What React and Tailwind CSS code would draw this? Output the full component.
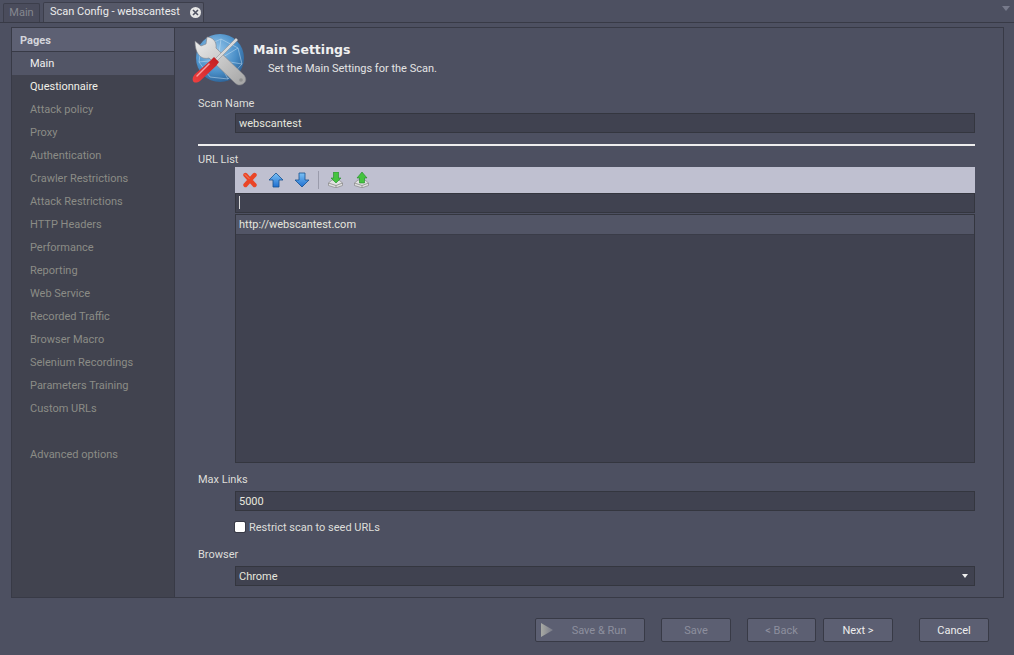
const PAGES = [
    ["Main", "selected"],
    ["Questionnaire", "on"],
    ["Attack policy"],
    ["Proxy"],
    ["Authentication"],
    ["Crawler Restrictions"],
    ["Attack Restrictions"],
    ["HTTP Headers"],
    ["Performance"],
    ["Reporting"],
    ["Web Service"],
    ["Recorded Traffic"],
    ["Browser Macro"],
    ["Selenium Recordings"],
    ["Parameters Training"],
    ["Custom URLs"],
]

function ToolsIcon() {
    return (
        <svg width="56" height="56" viewBox="0 0 56 56" className="shrink-0">
            <defs>
                <radialGradient id="globe" cx="0.4" cy="0.35" r="0.75">
                    <stop offset="0" stopColor="#9ccbee" />
                    <stop offset="0.6" stopColor="#4a8fc8" />
                    <stop offset="1" stopColor="#235589" />
                </radialGradient>
                <linearGradient id="metal" x1="0" y1="0" x2="1" y2="1">
                    <stop offset="0" stopColor="#eeeeee" />
                    <stop offset="1" stopColor="#a3a3a3" />
                </linearGradient>
                <linearGradient id="handle" x1="0" y1="1" x2="1" y2="0">
                    <stop offset="0" stopColor="#f04040" />
                    <stop offset="1" stopColor="#c01c20" />
                </linearGradient>
            </defs>
            <circle cx="28" cy="28" r="24" fill="url(#globe)" />
            <g stroke="#cfe6f7" strokeWidth="0.6" fill="none" opacity="0.8">
                <path d="M9 18 L29 9 L46 18 L50 34 L36 49 L18 47 L7 32 Z" />
                <path d="M29 9 L26 30 L46 18 M26 30 L50 34 M26 30 L36 49 M26 30 L7 32" />
            </g>
            <path
                d="M3 11 L9 16 L14 14 L15 7 C21 7 25 12 24 18 L52 45 C55 49 54 52 51 54 C48 56 45 55 43 53 L17 28 C10 30 3 25 3 11 Z"
                fill="url(#metal)"
                stroke="#7d7f86"
                strokeWidth="0.6"
            />
            <path d="M44 8 L46 10 L25 31 L23 29 Z" fill="#d8d8d8" stroke="#85878c" strokeWidth="0.5" />
            <path d="M22 27 L27 32 L24 36 L8 51 C5 53 2 53 1 51 C0 49 1 46 3 44 L18 31 Z" fill="url(#handle)" />
            <path d="M17 34 L5 46" stroke="#f7a0a0" strokeWidth="1.4" strokeLinecap="round" />
            <circle cx="49" cy="50" r="1.8" fill="#8f8f8f" />
        </svg>
    )
}

function ArrowIcon({ up }) {
    return (
        <svg width="16" height="16" viewBox="0 0 16 16">
            <defs>
                <linearGradient id="arrowBlue" x1="0" y1="0" x2="0" y2="1">
                    <stop offset="0" stopColor="#7cc2f5" />
                    <stop offset="1" stopColor="#1f6fd0" />
                </linearGradient>
            </defs>
            <path
                d={up ? "M8 1 L15 8 L11 8 L11 15 L5 15 L5 8 L1 8 Z" : "M5 1 L11 1 L11 8 L15 8 L8 15 L1 8 L5 8 Z"}
                fill="url(#arrowBlue)"
                stroke="#17508f"
                strokeWidth="0.8"
            />
        </svg>
    )
}

function TrayIcon({ up }) {
    return (
        <svg width="16" height="16" viewBox="0 0 16 16">
            <path d="M0.5 11 L4 8 L11 8 L14.5 11 L14.5 13.5 L8 15.8 L0.5 13.5 Z" fill="#e2e2e2" stroke="#7c7c7c" strokeWidth="0.6" />
            <path d="M0.5 11 L8 13.5 L14.5 11 M8 13.5 L8 15.8" fill="none" stroke="#7c7c7c" strokeWidth="0.7" />
            <path
                d={up ? "M8 0 L13 6 L10.5 6 L10.5 11 L5.5 11 L5.5 6 L3 6 Z" : "M5.5 0 L10.5 0 L10.5 6 L13 6 L8 11 L3 6 L5.5 6 Z"}
                fill="#45c43f"
                stroke="#22862a"
                strokeWidth="0.6"
            />
        </svg>
    )
}

function DeleteIcon() {
    return (
        <svg width="16" height="16" viewBox="0 0 16 16">
            <path d="M3.5 3 L12.5 13 M12.5 3 L3.5 13" stroke="#ea4526" strokeWidth="4.4" strokeLinecap="round" />
            <path d="M3 2.5 L7 6.5" stroke="#f58a6a" strokeWidth="1" strokeLinecap="round" />
        </svg>
    )
}

function Label({ children, className = "" }) {
    return <label className={`h-[16px] pt-px leading-[16px] ${className}`}>{children}</label>
}

function Field({ children, className = "" }) {
    return (
        <div className={`ml-[37px] mr-[28px] h-[20px] flex items-center px-[3px] pt-[2px] bg-[#404250] border border-[#34363f] text-[#e6e6de] ${className}`}>
            {children}
        </div>
    )
}

function FooterButton({ children, disabled, className = "" }) {
    return (
        <button className={`h-[24px] pt-[2px] rounded-[2px] border border-[#383a46] bg-[#5c5f72] flex items-center justify-center ${disabled ? "text-[#8d8f9e]" : "text-[#ededed]"} ${className}`}>
            {children}
        </button>
    )
}

export default function App() {
    return (
        <div className="w-[1014px] h-[655px] overflow-hidden flex flex-col bg-[#4d5061] text-[11px] text-[#dededa] font-['Roboto','Open_Sans',sans-serif]">
            <div className="h-[23px] shrink-0 flex items-end pl-[3px] gap-[3px] border-b border-[#383a46] relative">
                <div className="w-[37px] h-[19px] flex items-center justify-center bg-[#4a4c5c] border border-b-0 border-[#3c3e4b] rounded-t-[2px] text-[#85878f]">
                    Main
                </div>
                <div className="w-[161px] h-[20px] flex items-center pl-[6px] bg-[#565969] border border-b-0 border-[#3c3e4b] rounded-t-[2px] text-[#ececec]">
                    <span>Scan Config - webscantest</span>
                    <span className="ml-auto mr-[2px] w-[11px] h-[11px] rounded-full bg-[#e6e6e6] flex items-center justify-center">
                        <svg width="7" height="7" viewBox="0 0 7 7">
                            <path d="M1 1 L6 6 M6 1 L1 6" stroke="#505363" strokeWidth="1.6" />
                        </svg>
                    </span>
                </div>
                <svg width="10" height="6" viewBox="0 0 10 6" className="absolute right-[3px] top-[6px]">
                    <path d="M1 0 L9 0 L5 5 Z" fill="#777a8b" />
                </svg>
            </div>

            <div className="mt-[4px] ml-[11px] mr-[10px] h-[571px] shrink-0 flex border border-[#383a46]">
                <aside className="w-[163px] shrink-0 flex flex-col bg-[#41434f] border-r border-[#383a46]">
                    <div className="h-[24px] shrink-0 flex items-center pl-[8px] pt-[4px] bg-[#5d6073] border-b border-[#383a46] font-bold text-[#d4d5dc]">
                        Pages
                    </div>
                    <ul>
                        {PAGES.map(([name, state]) => (
                            <li
                                key={name}
                                className={`h-[23px] pt-[2px] flex items-center pl-[18px] ${
                                    state === "selected" ? "bg-[#525566] text-[#f0f0f0]" : state === "on" ? "text-[#f0f0e8]" : "text-[#8b8c86]"
                                }`}
                            >
                                {name}
                            </li>
                        ))}
                        <li className="h-[23px] pt-[2px] mt-[23px] flex items-center pl-[18px] text-[#8b8c86]">Advanced options</li>
                    </ul>
                </aside>

                <main className="flex-1 flex flex-col pl-[23px]">
                    <div className="h-[68px] shrink-0 flex items-start -ml-[6px] pt-[2px]">
                        <ToolsIcon />
                        <div className="ml-[5px] pt-[12px]">
                            <p className="text-[12.5px] leading-[16px] font-bold text-[#f0f0f0] font-['DejaVu_Sans',sans-serif]">Main Settings</p>
                            <p className="mt-[3px] ml-[15px] leading-[16px] text-[#e4e4e4]">Set the Main Settings for the Scan.</p>
                        </div>
                    </div>

                    <Label className="mt-[-1px]">Scan Name</Label>
                    <Field className="mt-[2px]">webscantest</Field>
                    <div className="h-[2px] mt-[11px] mr-[28px] bg-[#eeeeee]" />

                    <Label className="mt-[5px]">URL List</Label>
                    <div className="ml-[37px] mr-[28px] h-[26px] flex items-center gap-[10px] pl-[7px] bg-[#bfc0d0]">
                        <DeleteIcon />
                        <ArrowIcon up />
                        <ArrowIcon />
                        <span className="w-px h-[18px] bg-[#9a9bab] -ml-[2px] -mr-px" />
                        <TrayIcon />
                        <TrayIcon up />
                    </div>
                    <Field>
                        <span className="w-px h-[13px] -mt-[3px] bg-[#d8d8d8]" />
                    </Field>
                    <div className="ml-[37px] mr-[28px] h-[249px] mt-px bg-[#404250] border border-[#34363f]">
                        <div className="h-[20px] pt-[2px] flex items-center pl-[3px] bg-[#525566] border-b border-[#3a3c48] text-[#e6e6de]">http://webscantest.com</div>
                    </div>

                    <Label className="mt-[8px]">Max Links</Label>
                    <Field className="mt-[4px]">5000</Field>
                    <div className="ml-[37px] mt-[8px] h-[16px] flex items-center gap-[4px]">
                        <span className="w-[10px] h-[10px] bg-white rounded-[1px] outline outline-1 outline-[#383a46]" />
                        <span className="pt-[2px]">Restrict scan to seed URLs</span>
                    </div>
                    <Label className="mt-[11px]">Browser</Label>
                    <Field className="mt-[4px] justify-between">
                        <span>Chrome</span>
                        <svg width="6" height="5" viewBox="0 0 6 5" className="mr-[3px] -mt-[2px]">
                            <path d="M0 0 L6 0 L3 4 Z" fill="#f0f0f0" />
                        </svg>
                    </Field>
                </main>
            </div>

            <div className="mt-[20px] ml-[535px] flex">
                <FooterButton disabled className="w-[110px] relative pl-[18px]">
                    <svg width="12" height="14" viewBox="0 0 12 14" className="absolute left-[5px] top-[4px]">
                        <defs>
                            <linearGradient id="playFade" x1="0" y1="0" x2="1" y2="0">
                                <stop offset="0" stopColor="#a8aaa4" />
                                <stop offset="1" stopColor="#777988" />
                            </linearGradient>
                        </defs>
                        <path d="M0 0 L12 7 L0 14 Z" fill="url(#playFade)" />
                    </svg>
                    Save &amp; Run
                </FooterButton>
                <FooterButton disabled className="w-[70px] ml-[16px]">Save</FooterButton>
                <FooterButton disabled className="w-[69px] ml-[16px]">&lt; Back</FooterButton>
                <FooterButton className="w-[70px] ml-[7px]">Next &gt;</FooterButton>
                <FooterButton className="w-[70px] ml-[26px]">Cancel</FooterButton>
            </div>
        </div>
    )
}
